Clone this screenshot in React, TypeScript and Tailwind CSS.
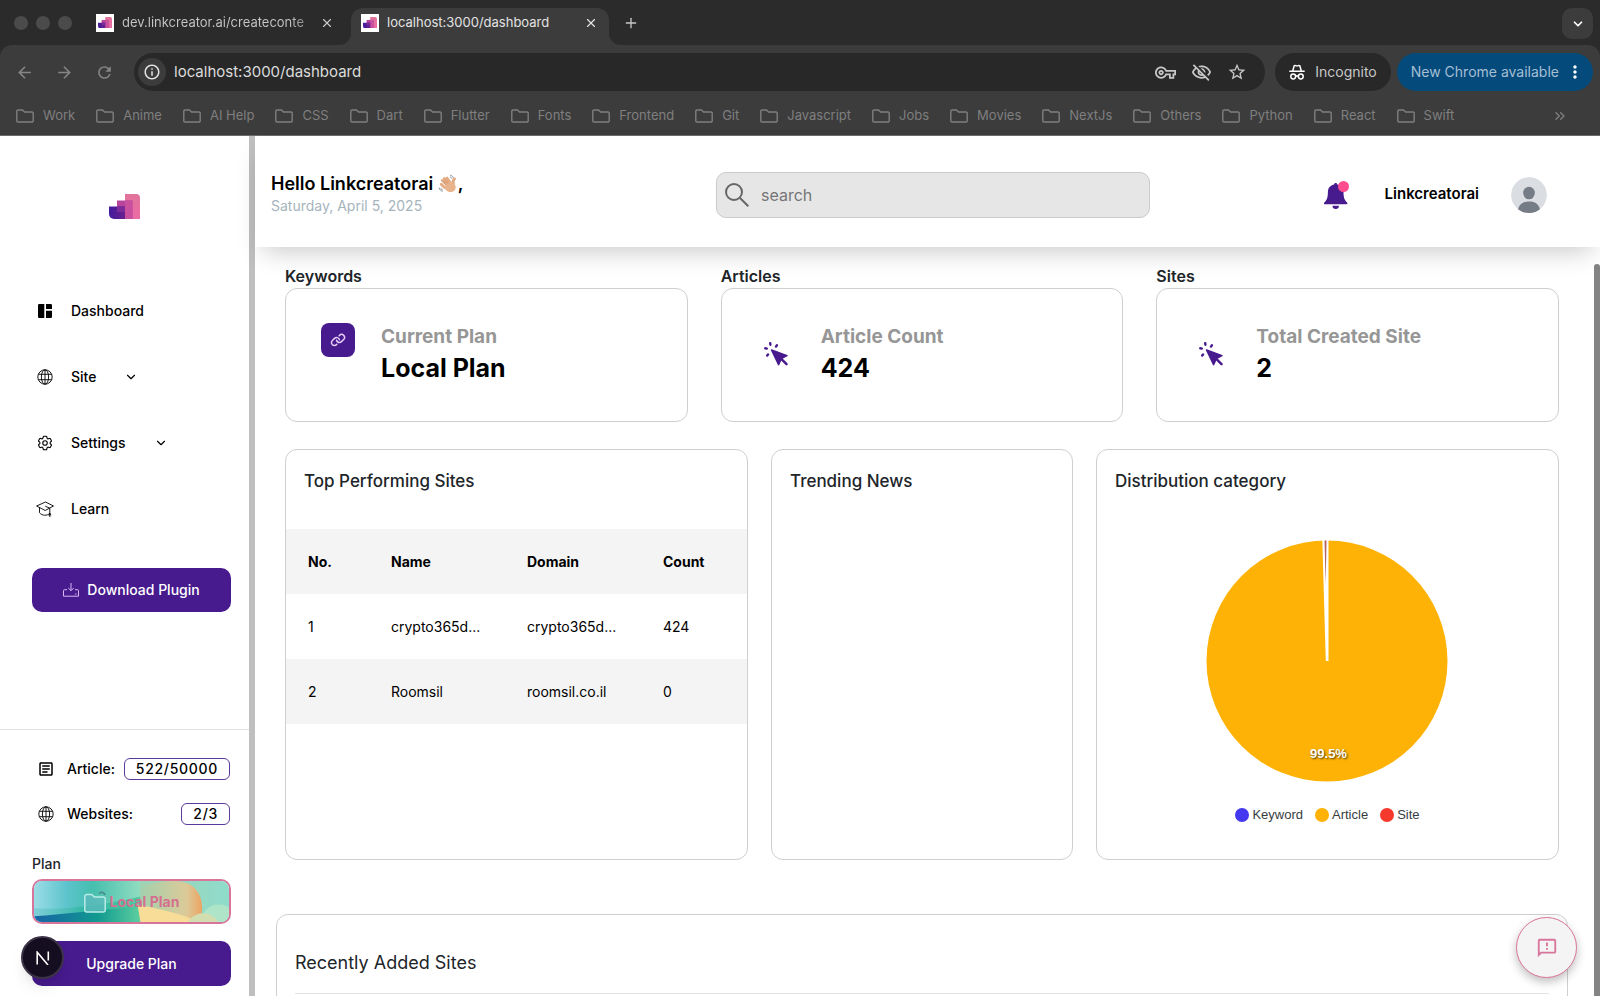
import { ChevronDown, ChevronsRight, Plus, X } from "lucide-react";
import { HiOutlineCog6Tooth } from "react-icons/hi2";
import {
  MdArrowBack,
  MdArrowForward,
  MdInfoOutline,
  MdMoreVert,
  MdOutlineArticle,
  MdOutlineFeedback,
  MdOutlineVisibilityOff,
  MdOutlineVpnKey,
  MdRefresh,
  MdStarBorder,
} from "react-icons/md";
import { PiLinkBold } from "react-icons/pi";

const BOOKMARKS = [
  "Work", "Anime", "AI Help", "CSS", "Dart", "Flutter", "Fonts", "Frontend", "Git",
  "Javascript", "Jobs", "Movies", "NextJs", "Others", "Python", "React", "Swift",
];

const NAV = [
  { name: "Dashboard", icon: <DashboardIcon />, expandable: false },
  { name: "Site", icon: <GlobeIcon />, expandable: true },
  { name: "Settings", icon: <HiOutlineCog6Tooth className="size-[18px]" />, expandable: true },
  { name: "Learn", icon: <GraduationIcon />, expandable: false },
];

const STATS = [
  { heading: "Keywords", label: "Current Plan", value: "Local Plan", kind: "link" },
  { heading: "Articles", label: "Article Count", value: "424", kind: "click" },
  { heading: "Sites", label: "Total Created Site", value: "2", kind: "click" },
];

const TOP_SITES = [
  { no: 1, name: "crypto365d...", domain: "crypto365d...", count: 424 },
  { no: 2, name: "Roomsil", domain: "roomsil.co.il", count: 0 },
];

const LEGEND = [
  { name: "Keyword", color: "bg-[#4338ef]" },
  { name: "Article", color: "bg-[#fdb205]" },
  { name: "Site", color: "bg-[#f53a2d]" },
];

function Logo({ className }: { className: string }) {
  return (
    <svg viewBox="0 0 31 25" className={className} aria-hidden="true">
      <defs>
        <linearGradient id="bar-tall" x1="0" y1="0" x2="0" y2="1">
          <stop offset="0" stopColor="#e0749a" />
          <stop offset="1" stopColor="#ec6ba6" />
        </linearGradient>
        <linearGradient id="bar-low" x1="0" y1="0" x2="1" y2="0">
          <stop offset="0" stopColor="#421d9e" />
          <stop offset="1" stopColor="#6a1f8e" />
        </linearGradient>
      </defs>
      <path d="M16 0h11a4 4 0 0 1 4 4v21H16z" fill="url(#bar-tall)" />
      <path d="M8 6.500h15.500V25H8z" fill="#b8449c" />
      <path d="M16 6.500h7.500V25H16z" fill="#c9509f" />
      <path d="M0 12.500h16V25H5a5 5 0 0 1-5-5z" fill="url(#bar-low)" />
      <path d="M8 12.500h8V18H8z" fill="#7d2a9a" />
    </svg>
  );
}

function DashboardIcon() {
  return (
    <svg viewBox="0 0 14 14" className="size-3.5" fill="currentColor" aria-hidden="true">
      <path d="M1.200 0H6.300V14H1.200A1.200 1.200 0 0 1 0 12.800V1.200A1.200 1.200 0 0 1 1.200 0zM8 0h4.800A1.200 1.200 0 0 1 14 1.200V5H8zM8 6.700h6v6.100a1.200 1.200 0 0 1-1.200 1.200H8z" />
    </svg>
  );
}

function GlobeIcon() {
  return (
    <svg viewBox="0 0 16 16" className="size-4" fill="none" stroke="currentColor" strokeWidth="0.9" aria-hidden="true">
      <circle cx="8" cy="8" r="7.200" />
      <ellipse cx="8" cy="8" rx="3.600" ry="7.200" />
      <path d="M8 .8v14.400M1.300 5.300h13.400M1.300 10.700h13.400" />
    </svg>
  );
}

function GraduationIcon() {
  return (
    <svg viewBox="0 0 18 18" className="size-[18px]" fill="none" stroke="currentColor" strokeWidth="0.9" strokeLinejoin="round" aria-hidden="true">
      <path d="M.6 6 9.500 2l8 4-8.300 4.500zM3.500 7.700v5c2.800 3.300 7.500 3.300 10.300.5" />
      <path d="M9.300 6.200l4.500 2V17M12.800 15.500 13.800 13l1 2.500" />
    </svg>
  );
}

function CursorClickIcon() {
  return (
    <svg viewBox="0 0 24 24" className="size-6" fill="currentColor" stroke="currentColor" strokeLinecap="round" strokeLinejoin="round" aria-hidden="true">
      <path d="M7.500 8 23 13.600l-5.700 3-2.700 6z" strokeWidth="1.500" />
      <path d="m17.500 17.200 5 5" strokeWidth="2.400" />
      <path d="m1.300 6.300 1.500.3M6.200 1.200l.2 1.500M12.900 3.300l-.9 1.300M4 12.500l-.8 1" strokeWidth="2.400" />
    </svg>
  );
}

function IncognitoIcon() {
  return (
    <svg viewBox="0 0 16 16" className="size-4" fill="none" stroke="#fff" strokeWidth="1.500" aria-hidden="true">
      <path d="M.3 7.200h15.400M3.700 7l1.500-5.300c.9-.8 1.800.2 2.800.2s1.900-1 2.800-.2L12.300 7" />
      <circle cx="4.200" cy="12.500" r="2.400" />
      <circle cx="11.800" cy="12.500" r="2.400" />
      <path d="M6.600 12.300c.9-.6 1.900-.6 2.800 0" />
    </svg>
  );
}

function FolderIcon() {
  return (
    <svg viewBox="0 0 18 14" className="h-3.5 w-[18px] shrink-0" fill="none" stroke="currentColor" strokeWidth="1.4" aria-hidden="true">
      <path d="M.8 2.200A1.200 1.200 0 0 1 2 1h4.500l2 2H16a1.200 1.200 0 0 1 1.200 1.200v7.600A1.200 1.200 0 0 1 16 13H2a1.200 1.200 0 0 1-1.200-1.200z" />
    </svg>
  );
}

function WavingHand() {
  return (
    <svg viewBox="0 0 20 20" className="size-5" role="img" aria-label="waving hand">
      <g stroke="#e3ab83" strokeWidth="2.700" strokeLinecap="round">
        <path d="M10 12 4.200 6.400M11.500 10.500 6.200 4.500M13 9.500 9 4M6.500 13.500 3.200 10.200" />
        <path d="M15.500 9.500c-.6-2 0-4 1.200-4.600" />
      </g>
      <path d="M5.500 13 12.500 7.500c1.800 1 5 1.800 5.200 5.500.2 3-2.400 5.200-5.200 5.200-3 0-5-2.400-7-5.200z" fill="#e8b48d" />
      <path d="M8 10.700 5 7.900M9.800 9.300 7.200 6.300" stroke="#c68a61" strokeWidth=".6" />
      <path d="M12.500 1.200c1.400.3 2.300 1.100 2.800 2.400M12.300 3c.7.2 1.200.7 1.500 1.300M1.200 14c.3 1.700 1.400 2.800 3 3.200M3 14.500c.2.800.8 1.300 1.500 1.500" fill="none" stroke="#7d8790" strokeWidth=".9" strokeLinecap="round" />
    </svg>
  );
}

function BrowserBar() {
  return (
    <header className="shrink-0 bg-[#2b2b2b] font-['Inter',sans-serif] text-[#c7c7c7]">
      {/* Tab strip */}
      <div className="flex h-[45px] items-end pr-[7px] pl-3.5">
        <div className="flex h-full items-center gap-2 pr-6">
          <span className="size-3.5 rounded-full bg-[#4b4b4b]" />
          <span className="size-3.5 rounded-full bg-[#4b4b4b]" />
          <span className="size-3.5 rounded-full bg-[#4b4b4b]" />
        </div>
        <div className="flex h-[37px] w-[255px] items-center pr-[17px] pb-2">
          <span className="grid size-[18px] shrink-0 place-items-center bg-white">
            <Logo className="w-3.5" />
          </span>
          <span className="ml-2 flex-1 bg-linear-to-r from-[#c7c7c7] from-85% to-[#4b4b4b] bg-clip-text text-[13px] whitespace-nowrap text-transparent">
            dev.linkcreator.ai/createconte
          </span>
          <button aria-label="Close tab">
            <X className="size-3.5" />
          </button>
        </div>
        <div className="relative flex h-[37px] w-[258px] items-center rounded-t-xl bg-[#3c3c3c] pr-[11px] pb-2 pl-2.5 before:absolute before:bottom-0 before:-left-3 before:size-3 before:rounded-br-xl before:shadow-[4px_4px_0_4px_#3c3c3c] after:absolute after:-right-3 after:bottom-0 after:size-3 after:rounded-bl-xl after:shadow-[-4px_4px_0_4px_#3c3c3c]">
          <span className="grid size-[18px] shrink-0 place-items-center bg-white">
            <Logo className="w-3.5" />
          </span>
          <span className="ml-2 flex-1 text-[13px] text-[#e3e3e3]">localhost:3000/dashboard</span>
          <button aria-label="Close tab">
            <X className="size-3.5 text-[#e3e3e3]" />
          </button>
        </div>
        <button aria-label="New tab" className="ml-3.5 pb-3.5">
          <Plus className="size-4" />
        </button>
        <button aria-label="Search tabs" className="mb-1.5 ml-auto grid size-[31px] place-items-center rounded-[10px] bg-[#3c3c3c] text-white">
          <ChevronDown className="size-3.5" strokeWidth={3} />
        </button>
      </div>

      {/* Toolbar */}
      <div className="relative rounded-t-xl border-b border-[#6b6b6b] bg-[#3c3c3c]">
        <div className="flex items-center pt-2 pr-[7px] pl-[15px]">
          <div className="flex w-[119px] items-center gap-[21px] text-[#858585]">
            <button aria-label="Back"><MdArrowBack className="size-[19px]" /></button>
            <button aria-label="Forward"><MdArrowForward className="size-[19px]" /></button>
            <button aria-label="Reload"><MdRefresh className="size-[19px]" /></button>
          </div>
          <div className="flex h-[38px] flex-1 items-center rounded-full bg-[#282828] pr-[18px] pl-1">
            <span className="grid size-7 place-items-center rounded-full bg-[#3c3c3c] text-[#e3e3e3]">
              <MdInfoOutline className="size-[18px]" />
            </span>
            <input
              aria-label="Address"
              defaultValue="localhost:3000/dashboard"
              className="ml-2 min-w-0 flex-1 bg-transparent text-[15px] text-[#dcdcdc] outline-none"
            />
            <div className="flex items-center gap-[15px]">
              <MdOutlineVpnKey className="size-[21px]" />
              <MdOutlineVisibilityOff className="size-[21px]" />
              <MdStarBorder className="size-5" />
            </div>
          </div>
          <span className="ml-2.5 flex h-[38px] items-center gap-2.5 rounded-full bg-[#282828] pr-3.5 pl-3.5 text-sm">
            <IncognitoIcon />
            Incognito
          </span>
          <button className="ml-1.5 flex h-[38px] items-center gap-1.5 rounded-full bg-[#044a7b] pr-2 pl-3.5 text-sm text-[#a4bfd4]">
            New Chrome available
            <MdMoreVert className="size-5 text-white" />
          </button>
        </div>
        <nav aria-label="Bookmarks" className="flex h-11 items-center gap-[21px] pt-1.5 pr-8 pl-4 text-[13px] text-[#7f7f7f]">
          {BOOKMARKS.map((name) => (
            <a key={name} href="#" className="flex items-center gap-[9px] whitespace-nowrap">
              <FolderIcon />
              {name}
            </a>
          ))}
          <ChevronsRight className="ml-auto size-4" />
        </nav>
      </div>
    </header>
  );
}

function PlanArtwork() {
  return (
    <svg viewBox="0 0 196 42" preserveAspectRatio="none" className="absolute inset-0 size-full" aria-hidden="true">
      <defs>
        <linearGradient id="sea" x1="0" y1="0" x2="1" y2="0">
          <stop offset="0" stopColor="#9bdde6" />
          <stop offset=".17" stopColor="#5cc3cc" />
          <stop offset=".3" stopColor="#45bfae" />
          <stop offset=".54" stopColor="#8fdcc0" />
          <stop offset=".55" stopColor="#9fd3b3" />
          <stop offset="1" stopColor="#8fdccb" />
        </linearGradient>
        <linearGradient id="wave" x1="0" y1="0" x2="1" y2="0">
          <stop offset="0" stopColor="#7fcfd8" />
          <stop offset=".5" stopColor="#2fb5a3" />
          <stop offset="1" stopColor="#4fcba0" />
        </linearGradient>
        <linearGradient id="deep" x1="0" y1="0" x2="1" y2="0">
          <stop offset="0" stopColor="#1763a5" />
          <stop offset=".6" stopColor="#119a90" />
          <stop offset="1" stopColor="#5ccf9f" />
        </linearGradient>
        <linearGradient id="sun" x1="0" y1="0" x2="1" y2="0">
          <stop offset="0" stopColor="#a3d0ad" />
          <stop offset=".75" stopColor="#dcca98" />
          <stop offset="1" stopColor="#eda262" />
        </linearGradient>
      </defs>
      <path d="M0 0h196v42H0z" fill="url(#sea)" />
      <path d="M0 28C30 30 70 25 107 16V42H0z" fill="url(#wave)" />
      <path d="M0 36C30 34 70 29 107 26V42H0z" fill="url(#deep)" />
      <path d="M107 7C125-1 150-3 160 6c10 9 11 24 6 36h-59z" fill="url(#sun)" />
      <path d="M104 24c20 4 46 10 62 18h-59z" fill="#f8dd98" />
      <circle cx="186" cy="42" r="18" fill="#aee5c9" />
      <circle cx="170" cy="50" r="17" fill="#d2ddb0" />
    </svg>
  );
}

function Sidebar() {
  return (
    <aside className="flex w-[255px] shrink-0 flex-col border-r-[6px] border-[#bfbfbf] bg-white text-sm font-medium text-black">
      <div className="flex justify-center pt-[58px]">
        <Logo className="w-[31px]" />
      </div>

      <nav className="mt-[59px] pl-9">
        {NAV.map((item) => (
          <a key={item.name} href="#" className="flex h-[66px] items-center">
            <span className="grid w-[18px] place-items-center">{item.icon}</span>
            <span className="ml-[17px]">{item.name}</span>
            {item.expandable && <ChevronDown className="ml-7 size-3.5" />}
          </a>
        ))}
      </nav>

      <div className="mt-[26px] pr-[18px] pl-8">
        <button className="flex h-11 w-full items-center justify-center gap-2 rounded-[10px] bg-[#471a8e] text-white">
          <svg viewBox="0 0 16 16" className="size-4" fill="none" stroke="#d9b8f5" strokeWidth="1" aria-hidden="true">
            <path d="M8 1v7.500M5.300 6 8 8.700 10.700 6M4 7.700H1.500a1 1 0 0 0-1 1v5.500h15V8.700a1 1 0 0 0-1-1H12" />
            <path d="M12 12h1.500" />
          </svg>
          Download Plugin
        </button>
      </div>

      {/* Usage and plan */}
      <div className="mt-auto border-t border-[#e3e3e3] pt-[27px] pr-[18px] pb-2.5 pl-8">
        <div className="flex h-[23px] items-center pr-px pl-[5px]">
          <MdOutlineArticle className="size-[18px]" />
          <span className="ml-3">Article:</span>
          <span className="ml-auto rounded-md border border-[#5a3a9c] px-[11px] leading-5 tracking-wider">522/50000</span>
        </div>
        <div className="mt-[22px] flex h-[23px] items-center pr-px pl-[5px]">
          <span className="grid w-[18px] place-items-center"><GlobeIcon /></span>
          <span className="ml-3">Websites:</span>
          <span className="ml-auto rounded-md border border-[#5a3a9c] px-[11px] leading-5 tracking-wider">2/3</span>
        </div>
        <p className="mt-[29px] text-[#212529]">Plan</p>
        <button className="relative mt-[5px] flex h-[45px] w-full items-center justify-center overflow-hidden rounded-[10px] border-2 border-[#d8759a] font-bold text-[#d4708f]">
          <PlanArtwork />
          <span className="relative flex items-center gap-1">
            <svg viewBox="0 0 22 22" className="size-[22px]" aria-hidden="true">
              <path d="M.8 5.500A2 2 0 0 1 2.800 3.500h5l2.500 2.500h8.900a2 2 0 0 1 2 2v11a2 2 0 0 1-2 2H2.800a2 2 0 0 1-2-2z" fill="#5fb9bd" fillOpacity=".7" stroke="#b9ece6" strokeWidth="1.500" />
              <path d="M15 2.500c2-2 5-1.500 6 1.500" fill="none" stroke="#4d8c95" strokeWidth="1.800" />
            </svg>
            Local Plan
          </span>
        </button>
        <button className="mt-[17px] h-[45px] w-full rounded-[10px] bg-[#471a8e] text-white">Upgrade Plan</button>
      </div>
    </aside>
  );
}

function TopBar() {
  return (
    <div className="relative z-10 grid h-[111px] shrink-0 grid-cols-[445fr_434fr_397fr] items-center bg-white pt-1.5 pr-[53px] pl-4 shadow-[0_12px_24px_-8px_rgba(0,0,0,0.22)]">
      <div className="pb-0.5">
        <h1 className="flex items-center text-lg leading-6 font-semibold text-black">
          Hello Linkcreatorai&nbsp;
          <WavingHand />,
        </h1>
        <p className="text-sm leading-5 text-[#a6b4bd]">Saturday, April 5, 2025</p>
      </div>
      <label className="flex h-[46px] items-center gap-3 rounded-[10px] border border-[#cacaca] bg-[#e6e6e6] px-2">
        <svg viewBox="0 0 24 24" className="size-6 shrink-0" fill="none" stroke="#666" strokeWidth="2" aria-hidden="true">
          <circle cx="9" cy="9" r="8" />
          <path d="m15 15 8.300 8.300" />
        </svg>
        <input
          type="text"
          aria-label="search"
          placeholder="search"
          className="min-w-0 flex-1 bg-transparent text-base outline-none placeholder:text-[#757575]"
        />
      </label>
      <div className="flex items-center justify-end">
        <button aria-label="Notifications">
          <svg viewBox="0 0 25 28" className="h-7 w-[25px]" aria-hidden="true">
            <path d="M11.700 2c.9 0 1.500.6 1.500 1.400 3.900.7 6.300 3.600 6.300 7.600 0 6 1.300 8.300 3.600 10.500.7.800.3 1.800-.7 1.800H1c-1 0-1.400-1-.7-1.800C2.600 19.300 3.900 17 3.900 11c0-4 2.400-6.900 6.300-7.600C10.200 2.600 10.800 2 11.700 2z" fill="#471a8e" />
            <path d="M8.500 24.700h6.400a3.200 3.200 0 0 1-6.400 0z" fill="#471a8e" />
            <circle cx="19.500" cy="5.500" r="5.500" fill="#ff4d8f" />
          </svg>
        </button>
        <span className="ml-9 text-[15px] font-semibold text-black">Linkcreatorai</span>
        <svg viewBox="0 0 36 36" className="ml-8 size-9 rounded-full" role="img" aria-label="Profile">
          <circle cx="18" cy="18" r="18" fill="#dadde1" />
          <ellipse cx="18" cy="16" rx="5.800" ry="6.300" fill="#767c85" />
          <path d="M7 33c1-6 5-8.500 11-8.500S28 27 29 33a18 18 0 0 1-22 0z" fill="#767c85" />
        </svg>
      </div>
    </div>
  );
}

function StatCard({ heading, label, value, kind }: { heading: string; label: string; value: string; kind: string }) {
  return (
    <section>
      <h2 className="leading-6 font-semibold text-[#212529]">{heading}</h2>
      <div className="flex gap-[26px] rounded-xl border border-[#cfcfcf] px-[35px] pt-[34px] pb-9">
        {kind === "link" ? (
          <span className="grid size-[34px] place-items-center rounded-lg bg-[#471a8e] text-[#e6cdf7]">
            <PiLinkBold className="size-4" />
          </span>
        ) : (
          <span className="grid w-[38px] place-items-center text-[#471a8e]">
            <CursorClickIcon />
          </span>
        )}
        <div className="font-bold">
          <p className="text-[19px] leading-7 text-[#969696]">{label}</p>
          <p className="text-[25px] leading-[34px] text-black">{value}</p>
        </div>
      </div>
    </section>
  );
}

function TopSitesCard() {
  return (
    <section className="rounded-xl border border-[#cfcfcf]">
      <h2 className="px-[18px] pt-[18px] text-[17px] leading-[27px] font-medium text-[#212529]">Top Performing Sites</h2>
      <table className="mt-[34px] w-full table-fixed text-left text-sm text-black">
        <thead>
          <tr className="h-[65px] bg-[#f4f4f4]">
            <th className="w-[18%] pl-[22px] font-bold">No.</th>
            <th className="pl-[22px] font-bold">Name</th>
            <th className="pl-[22px] font-bold">Domain</th>
            <th className="w-[23%] pl-[22px] font-bold">Count</th>
          </tr>
        </thead>
        <tbody>
          {TOP_SITES.map((site) => (
            <tr key={site.no} className="h-[65px] even:bg-[#f4f4f4]">
              <td className="pl-[22px]">{site.no}</td>
              <td className="pl-[22px]">{site.name}</td>
              <td className="pl-[22px]">{site.domain}</td>
              <td className="pl-[22px]">{site.count}</td>
            </tr>
          ))}
        </tbody>
      </table>
    </section>
  );
}

function DistributionCard() {
  return (
    <section className="rounded-xl border border-[#cfcfcf] pb-[34px] font-['Liberation_Sans',sans-serif]">
      <h2 className="px-[18px] pt-[18px] font-['Inter',sans-serif] text-[17px] leading-[27px] font-medium text-[#212529]">
        Distribution category
      </h2>
      <svg viewBox="0 0 242 242" className="mx-auto mt-[45px] w-[242px]" role="img" aria-label="Distribution category chart">
        <circle cx="121" cy="121" r="120.500" fill="#fdb205" />
        <path d="M119.800 121 116.300 0h6.200V121z" fill="#fff" />
        <path d="M119.700 45 118.500.500h2z" fill="#b0655f" />
        <text
          x="122.500"
          y="218"
          textAnchor="middle"
          fill="#fff"
          className="text-[13px] font-bold [text-shadow:1px_1px_2px_rgba(0,0,0,0.7)]"
        >
          99.5%
        </text>
      </svg>
      <ul className="mt-[23px] flex justify-center gap-3 text-[13px] leading-5 text-[#373d3f]">
        {LEGEND.map((item) => (
          <li key={item.name} className="flex items-center gap-[3px]">
            <span className={`size-3.5 rounded-full ${item.color}`} />
            {item.name}
          </li>
        ))}
      </ul>
    </section>
  );
}

export default function App() {
  return (
    <div className="flex h-screen flex-col overflow-hidden bg-white font-['Inter',sans-serif]">
      <BrowserBar />
      <div className="relative flex min-h-0 flex-1">
        <Sidebar />
        <div className="flex min-w-0 flex-1 flex-col">
          <TopBar />
          <main className="relative min-h-0 flex-1 overflow-hidden">
            <div className="grid grid-cols-3 gap-[33px] pt-[17px] pr-[41px] pl-[30px]">
              {STATS.map((stat) => (
                <StatCard key={stat.heading} {...stat} />
              ))}
            </div>
            <div className="mt-[27px] grid grid-cols-[23fr_15fr_23fr] gap-[23px] pr-[41px] pl-[30px]">
              <TopSitesCard />
              <section className="rounded-xl border border-[#cfcfcf]">
                <h2 className="px-[18px] pt-[18px] text-[17px] leading-[27px] font-medium text-[#212529]">Trending News</h2>
              </section>
              <DistributionCard />
            </div>
            <div className="mt-[54px] pr-8 pl-[21px]">
              <section className="rounded-xl border border-[#cfcfcf] px-[18px] pt-[34px] pb-8">
                <h2 className="border-b border-[#e3e3e3] pb-[17px] text-lg leading-[27px] text-[#212529]">Recently Added Sites</h2>
              </section>
            </div>
            <div className="absolute top-[17px] right-0 bottom-0 w-1.5 rounded-t-full bg-[#848484]" />
          </main>
        </div>

        {/* Dev tools badge */}
        <button aria-label="Next.js dev tools" className="absolute bottom-[17px] left-[21px] grid size-[43px] place-items-center rounded-full border-2 border-[#3b3345] bg-[#150d20] shadow-lg">
          <svg viewBox="0 0 14 14" className="size-3.5" fill="none" stroke="#fff" strokeWidth="1.600" aria-hidden="true">
            <path d="M1.200 13.500V1.200L12 14M12.300.5v9" />
          </svg>
        </button>
        <button aria-label="Feedback" className="absolute right-[23px] bottom-[18px] z-20 grid size-[61px] place-items-center rounded-full border border-[#d8759a] bg-[#f5f4f5] text-[#d8759a] shadow-[0_4px_10px_rgba(0,0,0,0.25)]">
          <MdOutlineFeedback className="size-[22px]" />
        </button>
      </div>
    </div>
  );
}
